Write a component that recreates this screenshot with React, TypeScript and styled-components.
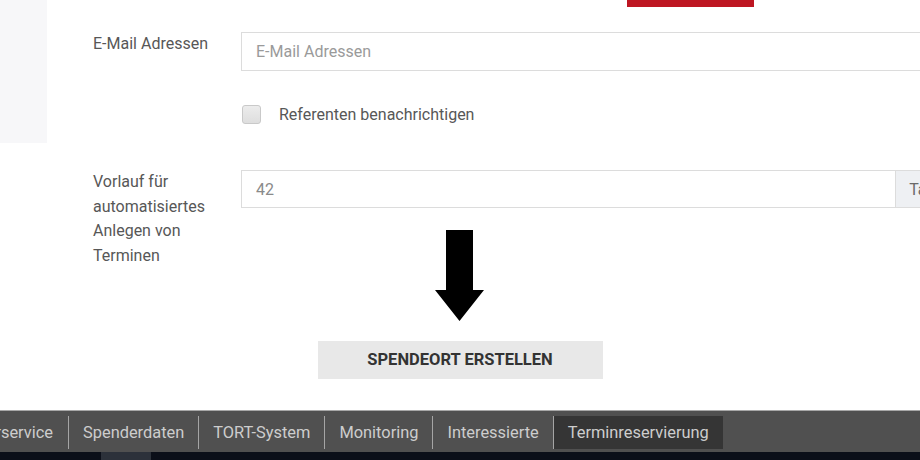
import React from 'react';
import styled, { createGlobalStyle } from 'styled-components';

const GlobalStyle = createGlobalStyle`
    html, body {
        margin: 0;
        padding: 0;
        background: #ffffff;
        overflow: hidden;
    }
    body {
        font-family: Roboto, "Liberation Sans", Arial, sans-serif;
    }
`;

const Page = styled.div`
    display: flex;
    flex-direction: column;
    width: 920px;
    height: 460px;
    overflow: hidden;
`;

const Workspace = styled.div`
    flex: 1;
    display: flex;
    flex-direction: column;
    overflow: hidden;
`;

const TopArea = styled.div`
    display: flex;
    align-items: flex-start;
`;

const Sidebar = styled.div`
    width: 47px;
    height: 143px;
    flex-shrink: 0;
    background-color: #f7f7f9;
`;

const Form = styled.div`
    display: flex;
    flex-direction: column;
    padding-left: 46px;
`;

const SaveButtonEdge = styled.div`
    width: 127px;
    height: 7px;
    margin-left: 534px;
    background-color: #be1622;
`;

const FieldRow = styled.div<{ $top: number }>`
    display: flex;
    align-items: flex-start;
    margin-top: ${(p) => p.$top}px;
`;

const Label = styled.label`
    width: 148px;
    flex-shrink: 0;
    box-sizing: border-box;
    padding-right: 18px;
    font-size: 16px;
    line-height: 24.7px;
    color: #575757;
`;

const InputGroup = styled.div`
    display: flex;
    width: 717px;
    flex-shrink: 0;
    border: 1px solid #dcdcdc;
    box-sizing: border-box;
    background: #ffffff;
`;

const Input = styled.input<{ $height: number }>`
    flex: 1;
    min-width: 0;
    height: ${(p) => p.$height - 2}px;
    padding: 0 14px;
    border: none;
    outline: none;
    font-family: inherit;
    font-size: 16px;
    color: #8a8a8a;
    background: transparent;

    &::placeholder {
        color: #9a9a9a;
    }
`;

const Addon = styled.span`
    display: flex;
    align-items: center;
    padding: 0 13px;
    border-left: 1px solid #dcdcdc;
    background: #eef0f3;
    font-size: 16px;
    color: #6a6a6a;
`;

const CheckRow = styled.label`
    display: flex;
    align-items: center;
    gap: 18px;
    margin: 34px 0 0 149px;
    font-size: 16px;
    color: #575757;
`;

const Checkbox = styled.span`
    width: 19px;
    height: 19px;
    box-sizing: border-box;
    border: 1px solid #c9c9c9;
    border-radius: 3px;
    background: linear-gradient(#ececec, #dedede);
`;

const Actions = styled.div`
    position: relative;
    display: flex;
    justify-content: center;
    margin-top: 72px;
`;

const ArrowMark = styled.svg`
    position: absolute;
    top: -111px;
    left: 435px;
`;

const CreateButton = styled.button`
    width: 285px;
    height: 38px;
    border: none;
    background-color: #e8e8e8;
    font-family: inherit;
    font-size: 16.5px;
    font-weight: 700;
    color: #333333;
    cursor: pointer;
`;

const Taskbar = styled.div`
    display: flex;
    align-items: center;
    height: 40px;
    padding-top: 1px;
    border-top: 1px solid #a8a8a8;
    background-color: #505050;
`;

const Tab = styled.div<{ $active?: boolean; $first?: boolean }>`
    display: flex;
    align-items: center;
    justify-content: flex-end;
    height: 33px;
    padding: ${(p) => (p.$first ? '0 15px 0 0' : '0 14px')};
    width: ${(p) => (p.$first ? '53px' : 'auto')};
    overflow: hidden;
    white-space: nowrap;
    border-left: ${(p) => (p.$first ? 'none' : '1px solid #a5a5a5')};
    background-color: ${(p) => (p.$active ? '#353535' : 'transparent')};
    font-size: 16.4px;
    color: #cdcdcd;
`;

const Dock = styled.div`
    display: flex;
    height: 8px;
    padding-left: 101px;
    background-color: #0b0f19;
`;

const DockItem = styled.div`
    width: 50px;
    background-color: #2c313a;
`;

const tabs = ['Spenderdaten', 'TORT-System', 'Monitoring', 'Interessierte'];

const App: React.FC = () => {
    return (
        <>
            <GlobalStyle />
            <Page>
                <Workspace>
                    <TopArea>
                        <Sidebar />
                        <Form>
                            <SaveButtonEdge />
                            <FieldRow $top={25}>
                                <Label>E-Mail Adressen</Label>
                                <InputGroup>
                                    <Input $height={39} placeholder="E-Mail Adressen" />
                                </InputGroup>
                            </FieldRow>
                            <CheckRow>
                                <Checkbox />
                                Referenten benachrichtigen
                            </CheckRow>
                            <FieldRow $top={46}>
                                <Label>Vorlauf für automatisiertes Anlegen von Terminen</Label>
                                <InputGroup>
                                    <Input $height={38} defaultValue="42" />
                                    <Addon>Tage</Addon>
                                </InputGroup>
                            </FieldRow>
                        </Form>
                    </TopArea>
                    <Actions>
                        <ArrowMark width="49" height="91" viewBox="0 0 49 91">
                            <polygon points="11,0 38,0 38,60 49,60 24.5,91 0,60 11,60" fill="#000" />
                        </ArrowMark>
                        <CreateButton>SPENDEORT ERSTELLEN</CreateButton>
                    </Actions>
                </Workspace>
                <Taskbar>
                    <Tab $first>Spenderservice</Tab>
                    {tabs.map((t) => (
                        <Tab key={t}>{t}</Tab>
                    ))}
                    <Tab $active>Terminreservierung</Tab>
                </Taskbar>
                <Dock>
                    <DockItem />
                </Dock>
            </Page>
        </>
    );
};

export default App;
